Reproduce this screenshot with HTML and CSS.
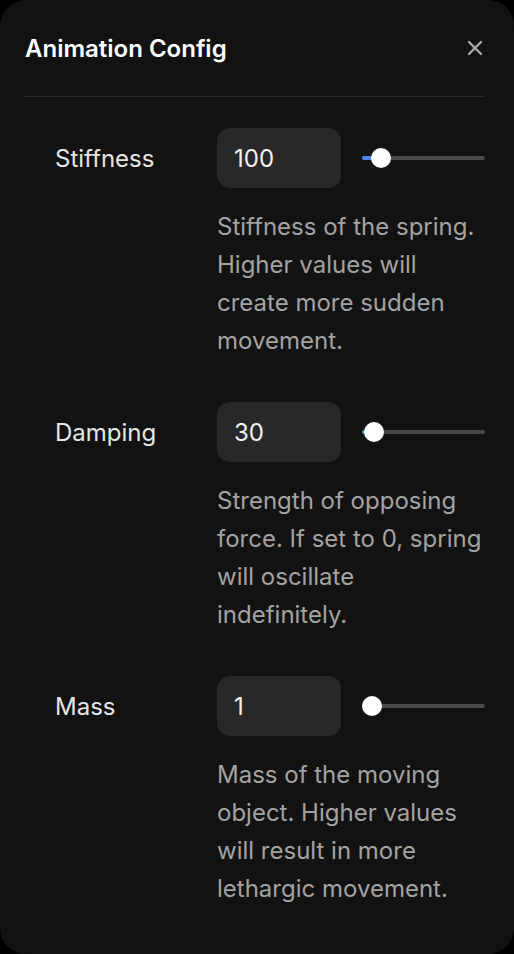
FILE: index.html
```html
<!DOCTYPE html>
<html lang="en">
<head>
    <meta charset="UTF-8">
    <meta name="viewport" content="width=device-width, initial-scale=1.0">
    <title>Animation Config</title>
    <link rel="stylesheet" href="styles.css">
</head>
<body>
    <div class="panel">
        <div class="panel-header">
            <h2>Animation Config</h2>
            <button class="close-btn" type="button" aria-label="Close">
                <svg width="16" height="16" viewBox="0 0 16 16" fill="none" stroke="#a8a8a8" stroke-width="2.4" stroke-linecap="round">
                    <path d="M2 2L14 14M14 2L2 14"/>
                </svg>
            </button>
        </div>

        <div class="settings">
            <div class="setting">
                <label class="setting-label" for="stiffness">Stiffness</label>
                <div class="setting-controls">
                    <input class="value-input" type="text" id="stiffness" value="100">
                    <div class="slider">
                        <div class="slider-fill" style="width: 19px"></div>
                        <div class="slider-thumb" style="left: 9px"></div>
                    </div>
                </div>
                <p class="setting-desc">Stiffness of the spring. Higher values will create more sudden movement.</p>
            </div>

            <div class="setting">
                <label class="setting-label" for="damping">Damping</label>
                <div class="setting-controls">
                    <input class="value-input" type="text" id="damping" value="30">
                    <div class="slider">
                        <div class="slider-fill" style="width: 6px"></div>
                        <div class="slider-thumb" style="left: 2px"></div>
                    </div>
                </div>
                <p class="setting-desc">Strength of opposing force. If set to 0, spring will oscillate indefinitely.</p>
            </div>

            <div class="setting">
                <label class="setting-label" for="mass">Mass</label>
                <div class="setting-controls">
                    <input class="value-input" type="text" id="mass" value="1">
                    <div class="slider">
                        <div class="slider-thumb" style="left: 0px"></div>
                    </div>
                </div>
                <p class="setting-desc">Mass of the moving object. Higher values will result in more lethargic movement.</p>
            </div>
        </div>
    </div>
</body>
</html>
```

FILE: styles.css
```css
body {
    margin: 0;
    background: #000000;
    font-family: Inter, "Noto Sans", sans-serif;
}
.panel {
    background-color: #121212;
    border-radius: 26px;
    height: 954px;
    box-sizing: border-box;
    padding: 0 29px 0 25px;
}
.panel-header {
    height: 96px;
    display: flex;
    align-items: center;
    justify-content: space-between;
    border-bottom: 1px solid #2a2a2a;
}
.panel-header h2 {
    margin: 0;
    color: #ffffff;
    font-size: 24px;
    font-weight: 600;
}
.close-btn {
    background: none;
    border: none;
    padding: 0;
    margin-right: 2px;
    display: flex;
    cursor: pointer;
}
.settings {
    padding: 31px 0 0 30px;
    display: flex;
    flex-direction: column;
    gap: 42px;
}
.setting {
    display: grid;
    grid-template-columns: 162px 1fr;
    row-gap: 20px;
}
.setting-label {
    align-self: center;
    color: #e6e6e6;
    font-size: 24px;
}
.setting-controls {
    display: flex;
    align-items: center;
    gap: 21px;
}
.value-input {
    width: 124px;
    height: 60px;
    box-sizing: border-box;
    padding: 0 17px;
    border: none;
    border-radius: 13px;
    background-color: #282828;
    color: #f2f2f2;
    font-family: inherit;
    font-size: 24px;
    outline: none;
}
.slider {
    position: relative;
    flex: 1;
    height: 4px;
    border-radius: 2px;
    background-color: #4a4a4a;
}
.slider-fill {
    height: 100%;
    border-radius: 2px;
    background-color: #4c86e0;
}
.slider-thumb {
    position: absolute;
    top: -8px;
    width: 20px;
    height: 20px;
    border-radius: 50%;
    background-color: #ffffff;
}
.setting-desc {
    grid-column: 2;
    margin: 0;
    color: #a3a3a3;
    font-size: 24px;
    line-height: 38px;
}
```
